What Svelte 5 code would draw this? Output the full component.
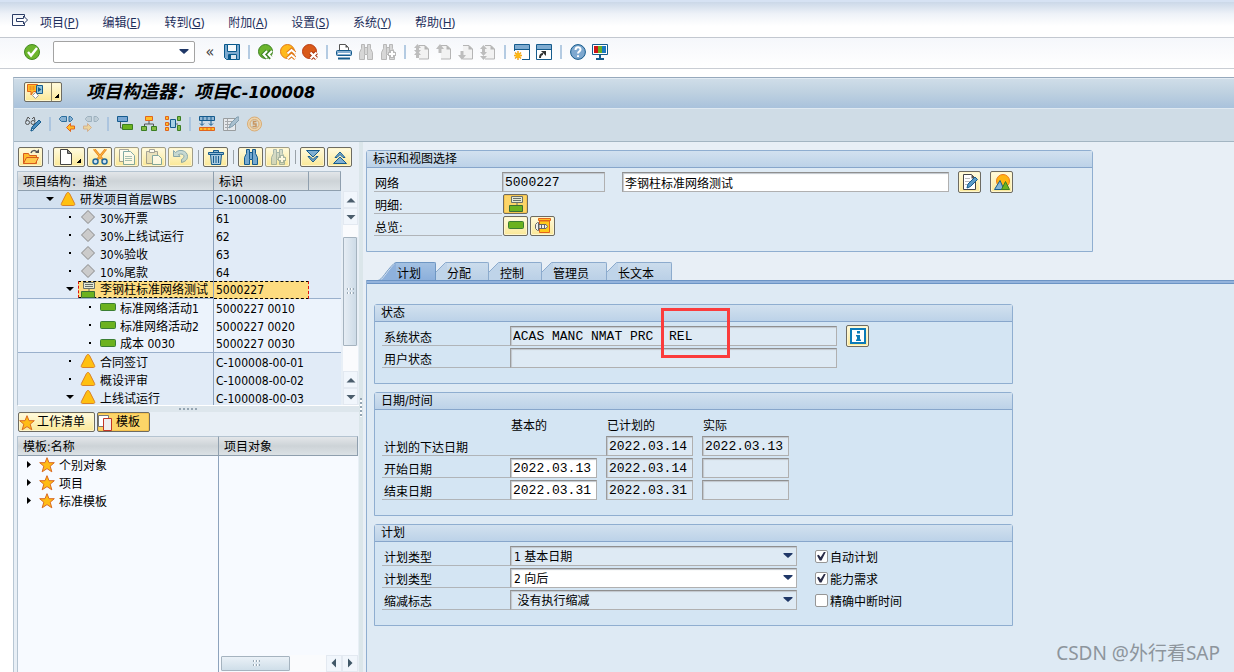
<script lang="ts">
  const menus = [
    ["项目", "P"], ["编辑", "E"], ["转到", "G"], ["附加", "A"],
    ["设置", "S"], ["系统", "Y"], ["帮助", "H"],
  ];

  const page = '<path d="M5 1.5h6l3.500 3.500v10H5" fill="#f2f2f2" stroke="#b5b5b5"/><path d="M10.500 1v4.500H15z" fill="#b5b5b5"/>';
  const binoculars = (f: string, s: string) =>
    `<path d="M3.500 .5h3v3h3v-3h3v4l2 4v7h-5v-5h-3v5h-5v-7l2-4z" fill="${f}" stroke="${s}"/><path d="M6.500 3v7M9.500 3v7" stroke="${s}"/>`;

  const icons: Record<string, string> = {
    exitbox: '<path d="M12.500 4V1.500H.5v11h12V10" fill="none" stroke="#2b3d66"/><path d="M4.500 8.500V5.500h7V3l4 4-4 4V8.500z" fill="#fff" stroke="#2b3d66"/>',
    ok: '<circle cx="8" cy="8" r="7.500" fill="#6cb52d" stroke="#448b22"/><path d="M4 8l3 3.500L13 4" fill="none" stroke="#fff" stroke-width="2.400"/>',
    save: '<path d="M.5.5h15v15h-13l-2-2z" fill="#7ba9cf" stroke="#08598c"/><path d="M3.500.5h9v7h-9z" fill="#f6fafc" stroke="#08598c"/><path d="M4.500 10.500h8v5h-8z" fill="#d8e5ef" stroke="#08598c"/><path d="M6 11v4" stroke="#08598c" stroke-width="2"/>',
    back: '<circle cx="7.500" cy="7.500" r="7" fill="#6cb52d" stroke="#3f8425"/><path d="M9 7L5.500 10.500 9 14m4-7l-3.500 3.500L13 14" fill="none" stroke="#3f8425" stroke-width="4"/><path d="M9 7L5.500 10.500 9 14m5-7l-3.500 3.500L14 14" fill="none" stroke="#fff" stroke-width="2"/>',
    exit: '<circle cx="7.500" cy="7.500" r="7" fill="#ffb91b" stroke="#e17a18"/><path d="M7.500 9.500L11.500 6l4 3.500m-8 5l4-3.500 4 3.500" fill="none" stroke="#e17a18" stroke-width="4"/><path d="M7.500 9.500L11.500 6l4 3.500m-8 5l4-3.500 4 3.500" fill="none" stroke="#fff" stroke-width="2"/>',
    cancel: '<circle cx="7.500" cy="7.500" r="7" fill="#d95a19" stroke="#b93b12"/><path d="M8.500 8.500l6 6m0-6l-6 6" stroke="#a9320f" stroke-width="4"/><path d="M8.500 8.500l6 6m0-6l-6 6" stroke="#fff" stroke-width="2.200"/>',
    print: '<path d="M3.500 7V.5h6l3 3V7" fill="#fff" stroke="#555"/><path d="M9.500.5v3h3z" fill="#555"/><rect x=".5" y="6.500" width="15" height="5" rx="1" fill="#86aed0" stroke="#155b8d"/><path d="M2 9.500h12" stroke="#fff"/><path d="M2 14.500h12" stroke="#155b8d" stroke-width="2"/>',
    find: binoculars("#d7d7d7", "#b8b8b8"),
    findnext: binoculars("#d7d7d7", "#b8b8b8") + '<path d="M12 6v8M8 10h8" stroke="#b8b8b8" stroke-width="4"/><path d="M12 7v6M9 10h6" stroke="#fff" stroke-width="2"/>',
    first: page + '<path d="M3.500 0L7 4H5v2h2l-3.500 4L0 6h2V4H0z" fill="#bdbdbd"/><path d="M3.500 7L7 11H5v3H2v-3H0z" fill="#bdbdbd"/>',
    prev: page + '<path d="M4 0l4 5H5.500v4h-3V5H0z" fill="#bdbdbd"/>',
    next: page + '<path d="M4 16l4-5H5.500V7h-3v4H0z" fill="#bdbdbd"/>',
    last: page + '<path d="M3.500 1L7 5H5v3h2l-3.500 4L0 8h2V5H0z" fill="#bdbdbd"/><path d="M3.500 16L7 12H0z" fill="#bdbdbd"/>',
    session: '<path d="M.5.5h15v15H8M.5.5V7" fill="#fff" stroke="#155b8d"/><path d="M1 1h14v4H1z" fill="#7fabd0"/><path d="M.5 5.500h15v10H8" fill="none" stroke="#155b8d"/><path d="M4 7v9M0 11.500h8M1 8.500l6 6m0-6l-6 6" stroke="#f3a51c" stroke-width="1.500"/><circle cx="4" cy="11.500" r="2.500" fill="#fdb913"/>',
    shortcut: '<path d="M.5.5h15v15H.5z" fill="#fff" stroke="#155b8d"/><path d="M1 1h14v4H1z" fill="#7fabd0"/><path d="M1 5.500h14" stroke="#155b8d"/><path d="M4 14c0-3 1-4 3-4" fill="none" stroke="#333" stroke-width="2"/><path d="M5 7h5v5z" fill="#333"/>',
    help: '<circle cx="8" cy="8" r="7.400" fill="#7ea8cf" stroke="#155b8d"/><path d="M5.500 6c0-3.500 5-3.500 5-.5 0 2-2.500 2-2.500 4M8 11.200v1.800" fill="none" stroke="#fff" stroke-width="2"/>',
    monitor: '<path d="M.5.5h15v10H.5z" fill="#fff" stroke="#155b8d"/><path d="M2 2h4v7H2z" fill="#cf1515"/><path d="M6 2h4v7H6z" fill="#6aae25"/><path d="M10 2h4v7h-4z" fill="#1a7ac0"/><path d="M8 10v5M4 15h8" stroke="#155b8d" stroke-width="2"/>',
    builder: '<path d="M.5.500h10v7h-4L4 11V7.500H.5z" fill="#ffbd27" stroke="#e2641c"/><path d="M2.500 3h6M2.500 5h5" stroke="#e2641c" stroke-dasharray="2 1"/><path d="M9.500 1.500h6v8h-6z" fill="#91c6dc" stroke="#155b8d"/><path d="M11 3v5l3.500-2.500z" fill="#155b8d"/><path d="M8.500 8.500l3 3-3 3-3-3z" fill="#fff" stroke="#999"/>',
    glasses: '<path d="M1 5l2-4 2 2m5 2L9 1 7 3" fill="none" stroke="#555"/><circle cx="2.500" cy="6.500" r="2" fill="none" stroke="#555"/><circle cx="8" cy="6.500" r="2" fill="none" stroke="#555"/><path d="M6 15l1-4 7-7 2 2-7 7z" fill="#4c8dbd" stroke="#155b8d"/><path d="M6 15l1-3 2 1.500z" fill="#fff" stroke="#155b8d"/>',
    chainleft: '<path d="M2.500.500h5v5h-5l-2-2v-1zM10 .5h1.500l2 2v1l-2 2H10z" fill="#88b2d3" stroke="#2a6d9e"/><path d="M7.500 11.500l4-4v2.500h4v3h-4v2.500z" fill="#ffbd27" stroke="#e2641c"/>',
    chainright: '<g opacity=".6"><path d="M4.500.500h4v5h-4l-2-2v-1zM11 .5h2.500l2 2v1l-2 2H11z" fill="#b5c4cd" stroke="#7d95a4"/><path d="M8.500 11.500l-4-4v2.500h-4v3h4v2.500z" fill="#ffcf6b" stroke="#d79457"/></g>',
    bars: '<path d="M.5.500h10v5H.5z" fill="#78a6d3" stroke="#155b8d"/><path d="M3.500 6v6H6" fill="none" stroke="#555"/><path d="M5.500 8.500h10v5h-10z" fill="#6cb21f" stroke="#3b7e22"/>',
    org: '<path d="M4.500.500h7v4h-7z" fill="#ffbd27" stroke="#e2641c"/><path d="M8 5v3M3.500 10V8h9v2" fill="none" stroke="#555"/><path d="M.5 10.500h5v4h-5zM10.500 10.500h5v4h-5z" fill="#86bb45" stroke="#3b7e22"/>',
    network: '<path d="M.5.500h3v3h-3zM.5 6.500h3v3h-3zM.5 11.500h3v3h-3z" fill="#ffbd27" stroke="#e2641c"/><path d="M5.500 3.500h5v8h-5z" fill="#a7d0e4" stroke="#155b8d"/><path d="M12.500.500h3v4h-3zM12.500 9.500h3v5h-3z" fill="#86bb45" stroke="#3b7e22"/><path d="M4 8h1m6 0h2" stroke="#666"/>',
    calendar: '<path d="M.5.500h15v4H.5z" fill="#91b7d5" stroke="#155b8d"/><path d="M4 1v3M8 1v3M12 1v3" stroke="#155b8d"/><path d="M3 5v4m9-4v4" stroke="#155b8d"/><path d="M1 7.500l2 2 2-2M10 7.500l2 2 2-2" fill="none" stroke="#155b8d"/><path d="M.5 11.500h15v3H.5z" fill="#ffbd27" stroke="#e2641c"/><path d="M4 12v2M8 12v2M12 12v2" stroke="#e2641c"/>',
    notes: '<g opacity=".75"><path d="M.5 2.500h12v12H.5z" fill="#eee" stroke="#888"/><path d="M2 5.500h9M2 8.500h7M2 11.500h5M4.500 3v11" stroke="#999"/><path d="M6 12l2-5 6-6h2v3l-6 6z" fill="#9bb6c7" stroke="#68899c"/></g>',
    coin: '<g opacity=".75"><circle cx="7.500" cy="8" r="7" fill="#f5d19b" stroke="#dc9b4d"/><circle cx="7.500" cy="8" r="4.500" fill="#dfdcca" stroke="#dc9b4d"/><path d="M9.500 5.500H6.500v2.500h2.500v2.500H5.500" fill="none" stroke="#c77f35" stroke-width="1.500"/></g>',
    folder: '<path d="M.5 4.500h5l1 2h7v8H.5z" fill="#ffbb2c" stroke="#d75b1d"/><path d="M3.500 8.500h12l-3 6H.5z" fill="#ffc74a" stroke="#d75b1d"/><path d="M8 4c1-3 4-3 6-1" fill="none" stroke="#555" stroke-width="1.500"/><path d="M12 4h4V0z" fill="#555"/>',
    newdoc: '<path d="M2.500.500h7l4 4v11h-11z" fill="#fff" stroke="#444"/><path d="M9.500.500v4h4z" fill="#888" stroke="#444"/>',
    cut: '<path d="M2 0l9 11M14 0L5 11" stroke="#e78224" stroke-width="2.500"/><path d="M2 0l9 11M14 0L5 11" stroke="#ffc23d"/><circle cx="3.500" cy="12.500" r="2.500" fill="#cde2f0" stroke="#22699c" stroke-width="1.500"/><circle cx="12.500" cy="12.500" r="2.500" fill="#cde2f0" stroke="#22699c" stroke-width="1.500"/>',
    copy: '<g opacity=".65"><path d="M.5.500h9v12h-9z" fill="#fff" stroke="#777"/><path d="M4.500 2.500h7l4 4v9h-11z" fill="#fff" stroke="#418393"/><path d="M6 7.500h7M6 9.500h7M6 11.500h7" stroke="#78a5ae"/></g>',
    paste: '<g opacity=".65"><path d="M.5 2.500h11v12H.5z" fill="#e1d9b6" stroke="#777"/><path d="M3.500.500h5v3h-5z" fill="#fff" stroke="#777"/><path d="M6.500 6.500h6l3 3v6h-9z" fill="#fff" stroke="#418393"/></g>',
    undo: '<g opacity=".65"><path d="M.5 7.500v-6l2 2c4-4 12-2 12 4 0 3-2 5-6 6v-3c4-2 3-7-3-5l1.500 2z" fill="#a9cad6" stroke="#4d7f9a"/></g>',
    trash: '<path d="M2.500 5.500h11l-1 10h-9z" fill="#a9cbe1" stroke="#155b8d"/><path d="M5.500 7v7M8 7v7M10.500 7v7" stroke="#155b8d"/><path d="M.5 3.500h15v2H.5zM5.500 3V1.500h5V3" fill="#8db8d5" stroke="#155b8d"/>',
    findblue: binoculars("#75a8cf", "#155b8d"),
    findnextdim: '<g opacity=".6">' + binoculars("#b9c9c4", "#708e92") + '<path d="M12 6v8M8 10h8" stroke="#708e92" stroke-width="4"/><path d="M12 7v6M9 10h6" stroke="#fff" stroke-width="2"/></g>',
    expand: '<path d="M1.500 1.500h13L8 8z" fill="#7fb0d2" stroke="#155b8d"/><path d="M3 7.500L8 13l5-5.500H11L8 10.500 5 7.500z" fill="#7fb0d2" stroke="#155b8d"/>',
    collapse: '<path d="M1.500 14.500h13L8 8z" fill="#7fb0d2" stroke="#155b8d"/><path d="M3 8.500L8 3l5 5.500H11L8 5.500 5 8.500z" fill="#7fb0d2" stroke="#155b8d"/>',
    wbs: '<path d="M8 .5c1 0 1.300.6 1.800 1.500l4.800 9.500c.4 1 0 2-1 2H2.400c-1 0-1.400-1-1-2L6.200 2c.5-.9.8-1.500 1.800-1.500z" fill="#ffc011" stroke="#d98229"/>',
    milestone: '<path d="M8 .5l6.500 6.500L8 13.500 1.500 7z" fill="#cbcbcb" stroke="#888"/>',
    net: '<path d="M3.500.500h11v6h-11z" fill="#e5e9d5" stroke="#69706a"/><path d="M5 2.500h8M5 4.500h8M9 7v3" stroke="#69706a"/><path d="M1.500 9.500h13v6h-13z" fill="#6cb21f" stroke="#3b6e36"/>',
    activity: '<rect x=".5" y="3.500" width="15" height="7" rx="1" fill="#6cb21f" stroke="#3b7e34"/>',
    star: '<path d="M8 .7l2 5h5.300l-4.100 3.500 1.600 5.600L8 11.600l-4.800 3.200 1.600-5.600L.7 5.700H6z" fill="#ffbc14" stroke="#d96821"/>',
    template: '<path d="M.5.500h10v11H.5z" fill="#fff" stroke="#777"/><path d="M5.500 3.500h8v12h-8z" fill="#eee" stroke="#c33525"/>',
    edit: '<path d="M1.500.500h8l4 4v11h-12z" fill="#fff" stroke="#444"/><path d="M9.500.500v4h4z" fill="#555"/><path d="M3 4.500h5M3 7.500h5M3 10.500h3" stroke="#bbb"/><path d="M5 14l1-4 7-7 2.500 2.500-7 7z" fill="#5b9bc8" stroke="#155b8d"/>',
    scene: '<circle cx="9" cy="7" r="6.500" fill="#ffb512" stroke="#ef7a1a"/><path d="M.5 15.500L6 6.500l4 9z" fill="#82b5d6" stroke="#155b8d"/><path d="M7.500 15.500l4-8 4 8z" fill="#6cb21f" stroke="#3b7e22"/>',
    screw: '<path d="M3.500.500h12v2h-12z" fill="#ffbd27" stroke="#e2641c"/><path d="M4.500 3h10v11.500h-10z" fill="#ffc91b" stroke="#e2641c"/><path d="M3.500 4.500v8h-1l-2-2v-4l2-2z" fill="#eee" stroke="#666"/><path d="M4 6.500h7l1.500 2-1.500 2H4z" fill="#eee" stroke="#666"/><path d="M6.500 6v5M9.500 6v5" stroke="#666"/>',
    info: '<path d="M1 1h14v14H1z" fill="#fff" stroke="#0b7bb8" stroke-width="2"/><path d="M7 3h3v2.500H7zM6 7h4v4.500h1V13H6v-1.500h1V8.500H6z" fill="#0b7bb8"/>',
    down: '<path d="M3.500 6h9v1L8 11 3.500 7z" fill="#1f3767"/>',
    up: '<path d="M3.500 10.500L8 6l4.500 4.500z" fill="#4b5d6c"/>',
    dn: '<path d="M3.500 6L8 10.500 12.500 6z" fill="#4b5d6c"/>',
    lt: '<path d="M10 3.500L5.500 8l4.500 4.500z" fill="#415868"/>',
    rt: '<path d="M6 3.500L10.500 8 6 12.500z" fill="#415868"/>',
    open: '<path d="M4 5h8L8 9z" fill="#000"/>',
    closed: '<path d="M6 4l4 3.500L6 11z" fill="#000"/>',
    dot: '<path d="M7 6h2v2H7z" fill="#000"/>',
  };

  const standardTools = [
    "print", "find", "findnext", "", "first", "prev", "next", "last", "",
    "session", "shortcut", "", "help", "monitor",
  ];
  const appTools = [
    "glasses", "", "chainleft", "chainright", "", "bars", "org", "network", "",
    "calendar", "notes", "coin",
  ];
  const treeTools = [
    "folder", "", "newdoc", "cut", "copy", "paste", "undo", "", "trash", "",
    "findblue", "findnextdim", "", "expand", "collapse",
  ];

  let selected = $state("5000227");
  const tree = [
    { level: 0, mark: "open", icon: "wbs", name: "研发项目首层WBS", id: "C-100008-00", tone: "root", line: true },
    { level: 1, mark: "dot", icon: "milestone", name: "30%开票", id: "61" },
    { level: 1, mark: "dot", icon: "milestone", name: "30%上线试运行", id: "62" },
    { level: 1, mark: "dot", icon: "milestone", name: "30%验收", id: "63" },
    { level: 1, mark: "dot", icon: "milestone", name: "10%尾款", id: "64" },
    { level: 1, mark: "open", icon: "net", name: "李钢柱标准网络测试", id: "5000227", line: true },
    { level: 2, mark: "dot", icon: "activity", name: "标准网络活动1", id: "5000227 0010", tone: "leaf" },
    { level: 2, mark: "dot", icon: "activity", name: "标准网络活动2", id: "5000227 0020", tone: "leaf" },
    { level: 2, mark: "dot", icon: "activity", name: "成本 0030", id: "5000227 0030", tone: "leaf", line: true },
    { level: 1, mark: "dot", icon: "wbs", name: "合同签订", id: "C-100008-00-01" },
    { level: 1, mark: "dot", icon: "wbs", name: "概设评审", id: "C-100008-00-02" },
    { level: 1, mark: "open", icon: "wbs", name: "上线试运行", id: "C-100008-00-03" },
  ];
  const templates = ["个别对象", "项目", "标准模板"];

  let activeTab = $state("计划");
  const tabs = ["计划", "分配", "控制", "管理员", "长文本"];

  const dates = [
    { label: "计划的下达日期", values: [null, "2022.03.14", "2022.03.13"] },
    { label: "开始日期", values: ["2022.03.13", "2022.03.14", ""] },
    { label: "结束日期", values: ["2022.03.31", "2022.03.31", ""] },
  ];
  const plan = $state([
    { label: "计划类型", value: "1 基本日期", check: "自动计划", on: true, edit: false },
    { label: "计划类型", value: "2 向后", check: "能力需求", on: true, edit: true },
    { label: "缩减标志", value: "\u00a0没有执行缩减", check: "精确中断时间", on: false, edit: false },
  ]);
</script>

{#snippet icon(name: string)}
  <svg class="icon" width="16" height="16" viewBox="0 0 16 16" aria-hidden="true">{@html icons[name]}</svg>
{/snippet}

<div class="page">
  <nav class="menubar">
    {@render icon("exitbox")}
    {#each menus as [text, key]}
      <button class="menu">{text}(<u>{key}</u>)</button>
    {/each}
  </nav>

  <div class="toolbar">
    <button class="tool" aria-label="ok">{@render icon("ok")}</button>
    <div class="combo command">
      <input class="command-input" aria-label="command" />
      {@render icon("down")}
    </div>
    <button class="tool fold">«</button>
    <button class="tool" aria-label="save">{@render icon("save")}</button>
    <i class="sep"></i>
    <button class="tool" aria-label="back">{@render icon("back")}</button>
    <button class="tool" aria-label="exit">{@render icon("exit")}</button>
    <button class="tool" aria-label="cancel">{@render icon("cancel")}</button>
    <i class="sep"></i>
    {#each standardTools as name}
      {#if name}
        <button class="tool" aria-label={name}>{@render icon(name)}</button>
      {:else}
        <i class="sep"></i>
      {/if}
    {/each}
  </div>

  <main class="shell">
    <header class="titlebar">
      <button class="btn builder" aria-label="builder">
        {@render icon("builder")}
        <i class="divider"></i>
        <i class="corner"></i>
      </button>
      <h1>项目构造器：项目<span class="code">C-100008</span></h1>
    </header>
    <div class="apptools">
      {#each appTools as name}
        {#if name}
          <button class="tool" aria-label={name}>{@render icon(name)}</button>
        {:else}
          <i class="sep"></i>
        {/if}
      {/each}
    </div>

    <div class="workspace">
      <aside class="left">
        <div class="treetools">
          {#each treeTools as name}
            {#if name}
              <button class="btn" class:wide={name === "newdoc"} class:dim={["copy", "paste", "undo", "findnextdim"].includes(name)} aria-label={name}>
                {@render icon(name)}
                {#if name === "newdoc"}<i class="corner"></i>{/if}
              </button>
            {:else}
              <i class="split"></i>
            {/if}
          {/each}
        </div>

        <div class="treebox">
          <table class="tree">
            <colgroup><col class="c-name" /><col class="c-id" /><col class="c-rest" /></colgroup>
            <thead>
              <tr><th>项目结构：描述</th><th>标识</th><th></th></tr>
            </thead>
            <tbody>
              {#each tree as row}
                <tr class={row.tone} class:line={row.line} class:selected={row.id === selected} onclick={() => (selected = row.id)}>
                  <td style="padding-left: {24 + row.level * 20}px">
                    <span class="node">
                      <span class="mark">{@render icon(row.mark)}</span>
                      <span class="item">{@render icon(row.icon)}<span class="name">{row.name}</span></span>
                    </span>
                  </td>
                  <td class="id">{row.id}</td>
                  <td></td>
                </tr>
              {/each}
            </tbody>
          </table>
          <div class="vscroll">
            <span class="head"></span>
            <button class="arrow" aria-label="up">{@render icon("up")}</button>
            <button class="arrow" aria-label="down">{@render icon("dn")}</button>
            <span class="track"></span>
            <span class="thumb"><i class="grip"></i></span>
            <span class="track rest"></span>
            <button class="arrow" aria-label="up">{@render icon("up")}</button>
            <button class="arrow" aria-label="down">{@render icon("dn")}</button>
          </div>
        </div>

        <div class="hsplit"><i class="dots"></i></div>

        <div class="views">
          <button class="btn text">{@render icon("star")}工作清单</button>
          <button class="btn text on">{@render icon("template")}模板</button>
        </div>

        <div class="templates">
          <table class="tree">
            <colgroup><col class="t-name" /><col /></colgroup>
            <thead>
              <tr><th>模板:名称</th><th>项目对象</th></tr>
            </thead>
            <tbody>
              {#each templates as name}
                <tr>
                  <td>
                    <span class="node top">
                      <span class="mark">{@render icon("closed")}</span>
                      <span class="item">{@render icon("star")}<span class="name">{name}</span></span>
                    </span>
                  </td>
                  <td></td>
                </tr>
              {/each}
            </tbody>
          </table>
          <div class="filler">
            <div class="fill-name"></div>
            <div class="hscroll">
              <span class="thumb"><i class="grip"></i></span>
              <span class="track rest"></span>
              <button class="arrow" aria-label="left">{@render icon("lt")}</button>
              <button class="arrow" aria-label="right">{@render icon("rt")}</button>
            </div>
          </div>
        </div>
      </aside>

      <div class="vsplit"><i class="dots vertical"></i></div>

      <section class="right">
        <section class="box ident">
          <h2>标识和视图选择</h2>
          <div class="rows">
            <div class="row">
              <label for="net">网络</label>
              <input id="net" class="field mono short" value="5000227" readonly />
              <input class="field long edit after" value="李钢柱标准网络测试" aria-label="网络描述" />
              <button class="btn tall" aria-label="edit">{@render icon("edit")}</button>
              <button class="btn tall" aria-label="scene">{@render icon("scene")}</button>
            </div>
            <div class="row">
              <span class="label">明细:</span>
              <div class="pair"><button class="btn on" aria-label="network">{@render icon("net")}</button></div>
            </div>
            <div class="row">
              <span class="label">总览:</span>
              <div class="pair">
                <button class="btn" aria-label="activity">{@render icon("activity")}</button>
                <button class="btn" aria-label="component">{@render icon("screw")}</button>
              </div>
            </div>
          </div>
        </section>

        <div class="tabs" role="tablist">
          {#each tabs as tab}
            <button class="tab" class:active={tab === activeTab} role="tab" aria-selected={tab === activeTab} onclick={() => (activeTab = tab)}>
              {#if tab === activeTab}
                <svg width="18" height="19" viewBox="0 0 18 19"><path d="M0 19C6 18 9 9 18 .5V19z" fill="#8eb1dc" /><path d="M0 18.500C4 18 8 9 16 1.500L18 .5" fill="none" stroke="#6f97c3" /></svg>
              {:else}
                <svg width="11" height="19" viewBox="0 0 11 19"><path d="M0 19V10L9.500 .5H11V19z" fill="#bfd4e9" /><path d="M0 10L9.500 .5H11" fill="none" stroke="#8cabcd" /></svg>
              {/if}
              <span>{tab}</span>
            </button>
          {/each}
        </div>

        <div class="panel">
          <section class="box">
            <h2>状态</h2>
            <div class="rows">
              <div class="row">
                <label for="sys">系统状态</label>
                <div class="marked">
                  <input id="sys" class="field mono long" value="ACAS MANC NMAT PRC  REL" readonly />
                  <i class="frame"></i>
                </div>
                <button class="btn tall" aria-label="info">{@render icon("info")}</button>
              </div>
              <div class="row">
                <label for="usr">用户状态</label>
                <input id="usr" class="field mono long" readonly />
              </div>
            </div>
          </section>

          <section class="box">
            <h2>日期/时间</h2>
            <div class="rows">
              <div class="row heads">
                <span class="blank"></span>
                <span class="date">基本的</span>
                <span class="date">已计划的</span>
                <span class="date">实际</span>
              </div>
              {#each dates as d, r}
                <div class="row">
                  <label for="d{r}" class:stretch={d.values[0] === null}>{d.label}</label>
                  {#each d.values as v, c}
                    {#if v !== null}
                      <input id={c === (r === 0 ? 1 : 0) ? `d${r}` : undefined} aria-label={d.label} class="field mono date" class:edit={c === 0} value={v} readonly={c > 0} />
                    {/if}
                  {/each}
                </div>
              {/each}
            </div>
          </section>

          <section class="box">
            <h2>计划</h2>
            <div class="rows">
              {#each plan as p, i}
                <div class="row">
                  <label for="p{i}">{p.label}</label>
                  <div class="combo">
                    <select id="p{i}" class="field" class:edit={p.edit}><option>{p.value}</option></select>
                    {@render icon("down")}
                  </div>
                  <label class="check"><input type="checkbox" bind:checked={p.on} /><span>{p.check}</span></label>
                </div>
              {/each}
            </div>
          </section>
        </div>
      </section>
    </div>
  </main>
  <div class="watermark">CSDN @外行看SAP</div>
</div>

<style>
  :global(body) {
    background: #fff;
  }
  .page {
    position: relative;
    display: flex;
    flex-direction: column;
    min-height: 100vh;
    color: #000;
    font: 12px/18px "DejaVu Sans Condensed", "Noto Sans CJK SC", sans-serif;
  }
  .page * {
    box-sizing: border-box;
  }
  button,
  input,
  select {
    margin: 0;
    padding: 0;
    border: 0;
    background: none;
    color: inherit;
    font: inherit;
  }
  .icon {
    display: block;
    flex: none;
  }

  .menubar {
    display: flex;
    align-items: center;
    gap: 24px;
    height: 38px;
    padding: 6px 12px 0;
    border-top: 2px solid #d6e2f3;
    border-bottom: 1px solid #c3c8d0;
    background: linear-gradient(#cbd8e8, #eef2f8 12px, #fff 24px);
  }
  .menubar > .icon {
    margin: 0 -12px 4px 0;
  }
  .menu {
    color: #1e2f5c;
    font-family: "Noto Sans", "Noto Sans CJK SC", sans-serif;
    white-space: nowrap;
  }
  .toolbar {
    display: flex;
    align-items: center;
    gap: 6px;
    height: 31px;
    padding: 0 24px 2px;
    border-bottom: 1px solid #c9cdd4;
    background: linear-gradient(#f5f7fb, #fff);
  }
  .tool {
    flex: none;
    width: 16px;
    height: 16px;
  }
  .fold {
    color: #444;
    font-size: 16px;
    line-height: 14px;
  }
  .sep {
    flex: none;
    width: 2px;
    height: 14px;
    margin: 0 2px;
    background: #b4cbe2;
  }
  .combo {
    position: relative;
    width: 287px;
    height: 20px;
  }
  .combo > .icon {
    position: absolute;
    top: 1px;
    right: 1px;
    pointer-events: none;
  }
  .command {
    width: 142px;
    height: 22px;
    margin: 0 1px 0 7px;
  }
  .command > .icon {
    right: 3px;
    top: 2px;
  }
  .command-input {
    width: 100%;
    height: 22px;
    padding: 0 20px 0 4px;
    border: 1px solid #a3a3a3;
    border-radius: 2px;
    background: #fff;
  }

  .shell {
    display: flex;
    flex: 1;
    flex-direction: column;
    margin: 8px 0 0 13px;
    border-top: 1px solid #97a9bc;
    border-left: 1px solid #b8c7d4;
    background: #e8eff6;
  }
  .titlebar {
    display: flex;
    align-items: center;
    gap: 24px;
    height: 31px;
    padding: 0 10px 3px;
    border-top: 1px solid #e2ebf3;
    border-bottom: 1px solid #dfe9f1;
    background: linear-gradient(#cfdde8, #bdd0e0 50%, #a9c2dc);
  }
  h1 {
    margin: 0;
    font: italic bold 18px/22px "DejaVu Sans", "Noto Sans CJK SC", sans-serif;
  }
  .code {
    font-size: 16px;
  }
  .apptools {
    display: flex;
    align-items: center;
    gap: 8px;
    height: 33px;
    padding: 0 11px 2px;
    border-bottom: 1px solid #a3b5c2;
    background: #cfdce6;
  }
  .apptools .sep {
    margin: 0;
    background: #acc5df;
  }

  .btn {
    display: flex;
    flex: none;
    align-items: center;
    justify-content: center;
    width: 25px;
    height: 20px;
    border: 1px solid #6d6b62;
    border-radius: 2px;
    background: linear-gradient(#fffbe0, #fbe896);
    box-shadow: inset 0 0 0 1px #fff6cc;
  }
  .btn.tall {
    width: 23px;
    height: 22px;
  }
  .btn.on {
    background: #fcd568;
    box-shadow: inset 0 0 0 1px #f5c450;
  }
  .btn.dim {
    border-color: #a09d88;
  }
  .btn.wide {
    width: 32px;
    gap: 3px;
  }
  .btn.builder {
    width: 38px;
    gap: 3px;
  }
  .divider {
    width: 1px;
    height: 18px;
    margin-left: 5px;
    background: #8b8468;
  }
  .corner {
    align-self: flex-end;
    width: 4px;
    height: 4px;
    margin-bottom: 3px;
    background: linear-gradient(135deg, transparent 50%, #000 50%);
  }

  .workspace {
    display: flex;
    flex: 1;
  }
  .left {
    display: flex;
    flex: none;
    flex-direction: column;
    width: 345px;
    padding-left: 3px;
  }
  .treetools {
    display: flex;
    gap: 2px;
    height: 29px;
    padding: 5px 1px 0;
  }
  .split {
    width: 1px;
    height: 14px;
    margin: 3px 2px 0 3px;
    background: #9aa2a8;
  }
  .treebox {
    display: flex;
    height: 235px;
    overflow: hidden;
    border-left: 1px solid #b5c4d1;
    border-bottom: 1px solid #fff;
  }
  .tree {
    flex: none;
    width: 323px;
    border-collapse: separate;
    border-spacing: 0;
    table-layout: fixed;
    align-self: flex-start;
    background: #e1ebf7;
  }
  .c-name {
    width: 196px;
  }
  .c-id {
    width: 95px;
  }
  .t-name {
    width: 201px;
  }
  th {
    height: 20px;
    padding: 2px 5px 0;
    border-top: 1px solid #b5c4d1;
    border-right: 1px solid #8f9fae;
    border-bottom: 1px solid #8f9fae;
    background: linear-gradient(#e3e6e9, #cdd3d7 50%, #dbe1e5);
    font-weight: normal;
    line-height: 16px;
    text-align: left;
    white-space: nowrap;
  }
  td {
    height: 18px;
    padding: 0;
    line-height: 17px;
    white-space: nowrap;
  }
  td:first-child {
    border-right: 1px solid #8ea3bd;
  }
  .id {
    padding: 1px 0 0 2px;
    line-height: 16px;
  }
  .root td {
    background: #d3e1f0;
  }
  .leaf td {
    background: #ecf3fc;
  }
  .line td {
    border-bottom: 1px solid #9ab0cc;
  }
  .node,
  .item {
    display: flex;
    align-items: center;
    gap: 4px;
    height: 17px;
  }
  .node {
    gap: 1px;
  }
  .item {
    flex: 1;
    padding-left: 2px;
  }
  .name {
    padding-top: 2px;
  }
  .mark {
    width: 15px;
    overflow: hidden;
  }
  .top {
    padding-left: 3px;
  }
  .selected .item,
  .selected .id {
    border-top: 1px dashed #000;
    border-bottom: 1px dashed #000;
    background: #fddc80;
  }
  .selected .item {
    padding-left: 1px;
    border-left: 1px dashed #e01010;
  }
  .selected .id {
    padding-top: 0;
    border-right: 1px dashed #e01010;
  }

  .vscroll {
    display: flex;
    flex-direction: column;
    width: 15px;
    margin-left: 2px;
  }
  .head {
    height: 20px;
    background: #e8eff6;
  }
  .arrow {
    display: flex;
    flex: none;
    align-items: center;
    justify-content: center;
    width: 16px;
    height: 17px;
    background: #f1f6fc;
    border: 1px solid #e3e9f1;
  }
  .vscroll .arrow {
    width: 15px;
  }
  .track {
    flex: none;
    height: 12px;
    background: #fafbfd;
  }
  .track.rest {
    flex: 1;
  }
  .thumb {
    display: flex;
    flex: none;
    align-items: center;
    justify-content: center;
    border: 1px solid #a5b3bf;
    border-radius: 1px;
  }
  .vscroll .thumb {
    width: 14px;
    height: 109px;
    background: linear-gradient(90deg, #e6edf4, #cddbe7);
  }
  .hscroll .thumb {
    width: 69px;
    height: 15px;
    margin-left: 2px;
    background: linear-gradient(#eaf1f7, #cfdee9);
  }
  .grip {
    width: 8px;
    height: 7px;
    background: repeating-linear-gradient(90deg, transparent 0 1px, #9aa9b5 1px 2px, #fff 2px 3px);
    mask: linear-gradient(#000 2px, transparent 2px 4px, #000 4px 6px, transparent 6px);
  }
  .hsplit {
    display: flex;
    align-items: center;
    justify-content: center;
    height: 6px;
    background: #dde6ec;
  }
  .dots {
    width: 19px;
    height: 2px;
    background: repeating-linear-gradient(90deg, #95a5b2 0 2px, transparent 2px 4px);
  }
  .dots.vertical {
    width: 2px;
    height: 19px;
    background: repeating-linear-gradient(#95a5b2 0 2px, #fff 2px 4px);
  }
  .views {
    display: flex;
    gap: 2px;
    padding: 0 1px 4px;
  }
  .btn.text {
    width: auto;
    gap: 2px;
    padding: 1px 9px 0 0;
    line-height: 17px;
  }
  .templates {
    display: flex;
    flex: 1;
    flex-direction: column;
    border-left: 1px solid #b5c4d1;
  }
  .templates .tree {
    width: 340px;
    background: #f7faff;
  }
  .filler {
    display: flex;
    flex: 1;
    width: 340px;
    background: #f7faff;
  }
  .fill-name {
    width: 201px;
    border-right: 1px solid #8ea3bd;
  }
  .hscroll {
    display: flex;
    flex: 1;
    align-self: flex-end;
    align-items: center;
    height: 18px;
  }
  .hscroll .track {
    height: 16px;
  }
  .vsplit {
    display: flex;
    flex: none;
    align-items: center;
    justify-content: center;
    width: 4px;
    background: #dbe6ea;
  }

  .right {
    display: flex;
    flex: 1;
    flex-direction: column;
    min-width: 0;
    padding: 8px 0 0 3px;
  }
  .box {
    max-width: 639px;
    border: 1px solid #8faed0;
    border-radius: 3px 3px 0 0;
    background: #d4e5f3;
  }
  .box.ident {
    max-width: 727px;
    background: #deeaf4;
  }
  h2 {
    height: 17px;
    margin: 0;
    padding: 0 6px;
    border-bottom: 1px solid #87a6cb;
    background: linear-gradient(#d2e1ef, #bcd2e8);
    font: inherit;
    line-height: 17px;
  }
  .rows {
    display: flex;
    flex-direction: column;
    gap: 2px;
    padding: 4px 7px 15px;
  }
  .row {
    display: flex;
    align-items: center;
    gap: 9px;
    height: 20px;
  }
  .row > label:first-child,
  .label {
    flex: none;
    width: 128px;
    height: 20px;
    margin-right: -9px;
    padding: 3px 0 0 2px;
    border-bottom: 1px solid #b0b4b8;
    line-height: 18px;
  }
  .ident .row > label:first-child,
  .label {
    padding-left: 1px;
  }
  .row > label.stretch {
    width: 224px;
  }
  .blank {
    width: 119px;
  }
  .field {
    height: 20px;
    padding: 0 2px;
    border: 1px solid #b0b0b0;
    border-top-color: #8f8f8f;
    border-left-color: #9c9c9c;
    background: #deeaf4;
    box-shadow: inset 1px 1px 1px #c0c6cc;
  }
  .field.edit {
    background: #fff;
  }
  .mono {
    font-family: "Liberation Mono", "Noto Sans CJK SC", monospace;
    font-size: 13px;
  }
  .short {
    width: 103px;
  }
  .long {
    width: 327px;
  }
  .after {
    margin-left: 8px;
  }
  .date {
    width: 87px;
  }
  .heads .date {
    padding: 3px 0 0 1px;
  }
  .pair {
    display: flex;
    gap: 2px;
    padding-left: 1px;
  }
  .marked {
    position: relative;
  }
  .frame {
    position: absolute;
    top: -18px;
    left: 151px;
    width: 69px;
    height: 50px;
    border: 3px solid #fb3c3c;
    pointer-events: none;
  }
  select.field {
    width: 100%;
    padding: 1px 20px 0 3px;
    border-radius: 0;
    appearance: none;
  }
  .check {
    display: flex;
    align-items: center;
    gap: 2px;
    margin-left: 9px;
  }
  .check span {
    padding-top: 3px;
  }
  .check input {
    display: flex;
    width: 13px;
    height: 13px;
    border: 1px solid #969696;
    border-radius: 2px;
    background: #fff;
    appearance: none;
  }
  .check input:checked::before {
    content: "";
    width: 9px;
    height: 9px;
    margin: 1px;
    background: #2a2c48;
    clip-path: polygon(0 45%, 20% 35%, 40% 65%, 80% 0, 100% 0, 50% 100%, 30% 100%);
  }

  .tabs {
    display: flex;
    height: 18px;
    margin-top: 10px;
    padding-left: 12px;
  }
  .tab {
    display: flex;
    height: 19px;
  }
  .tab svg {
    display: block;
  }
  .tab span {
    height: 19px;
    padding: 2px 17px 0 0;
    border-top: 1px solid #8cabcd;
    border-right: 1px solid #8cabcd;
    border-top-right-radius: 2px;
    background: linear-gradient(#cbdcec, #b9cfe6);
  }
  .tab.active span {
    padding: 2px 14px 0 1px;
    border-color: #6f97c3;
    background: linear-gradient(#a3c1e2, #8aaedb);
  }
  .panel {
    display: flex;
    flex: 1;
    flex-direction: column;
    gap: 8px;
    padding: 24px 7px 0;
    border-left: 1px solid #8faed0;
    background: linear-gradient(#6c94c4 1px, #93b3dc 1px 3px, #6c94c4 3px 4px, #deeaf4 4px);
  }
  .watermark {
    position: absolute;
    right: 14px;
    bottom: 6px;
    color: #8d959c;
    font: 19px/26px "Noto Sans", "Noto Sans CJK SC", sans-serif;
  }
</style>
